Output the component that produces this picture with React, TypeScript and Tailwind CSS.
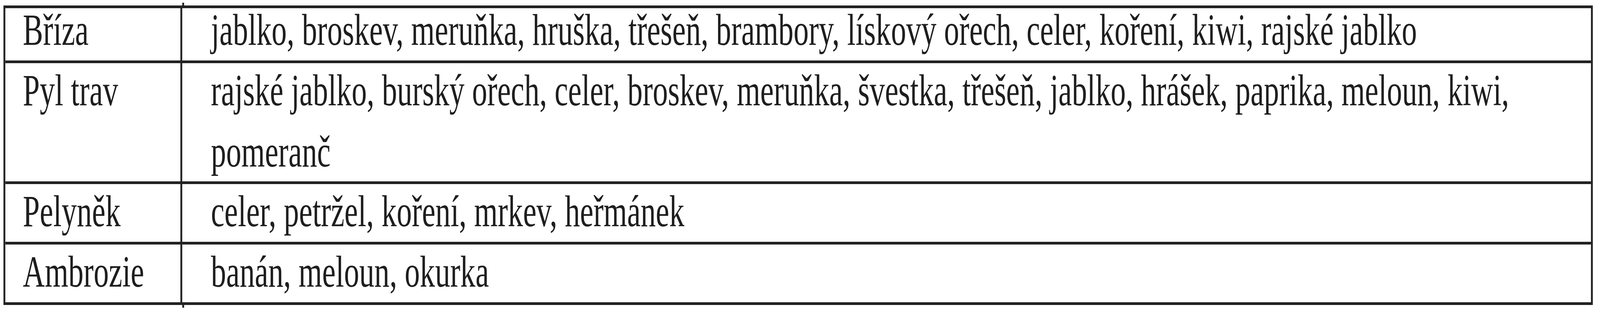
import { useEffect, useState } from "react";

const rows = [
  {
    name: "Bříza",
    foods:
      "jablko, broskev, meruňka, hruška, třešeň, brambory, lískový ořech, celer, koření, kiwi, rajské jablko",
  },
  {
    name: "Pyl trav",
    foods:
      "rajské jablko, burský ořech, celer, broskev, meruňka, švestka, třešeň, jablko, hrášek, paprika, meloun, kiwi, pomeranč",
  },
  { name: "Pelyněk", foods: "celer, petržel, koření, mrkev, heřmánek" },
  { name: "Ambrozie", foods: "banán, meloun, okurka" },
];

// the table is drawn for a 6014px wide page; squeeze it to the real window width
const PAGE_WIDTH = 6014;

function fitScale() {
  return Math.min(1, window.innerWidth / PAGE_WIDTH);
}

export default function App() {
  const [scale, setScale] = useState(fitScale);

  useEffect(() => {
    const onResize = () => setScale(fitScale());
    window.addEventListener("resize", onResize);
    return () => window.removeEventListener("resize", onResize);
  }, []);

  return (
    <div className="h-[800px] w-full overflow-hidden bg-white">
      <div
        className="w-[6014px] origin-top-left pt-[7px] font-['Liberation_Serif','Times_New_Roman',serif] text-[114px] leading-[157px] text-[#1e1e1e]"
        style={{ transform: `scaleX(${scale})` }}
      >
        {/* tick of the column rule above the table */}
        <div className="ml-[685px] h-[7px] w-[7px] bg-[#222]" />

        <div className="ml-[13px] w-[5974px] border-[7px] border-[#222]">
          {rows.map((row, i) => (
            <div
              key={row.name}
              className={
                i < rows.length - 1
                  ? "grid grid-cols-[665px_1fr] border-b-[7px] border-[#222]"
                  : "grid grid-cols-[665px_1fr]"
              }
            >
              <div className="flex flex-col border-r-[7px] border-[#222] pl-[66px]">
                <div className={i === 0 ? "-mt-[23px]" : "-mt-[9px]"}>{row.name}</div>
              </div>
              <div
                className={
                  i === 1
                    ? "-mb-[2px] flex flex-col pl-[108px] pr-[40px]"
                    : "flex flex-col pl-[108px] pr-[40px]"
                }
              >
                <div className={i === 0 ? "-mt-[23px]" : "-mt-[9px]"}>{row.foods}</div>
              </div>
            </div>
          ))}
        </div>

        {/* tick of the column rule below the table */}
        <div className="ml-[685px] h-[7px] w-[7px] bg-[#222]" />
      </div>
    </div>
  );
}
